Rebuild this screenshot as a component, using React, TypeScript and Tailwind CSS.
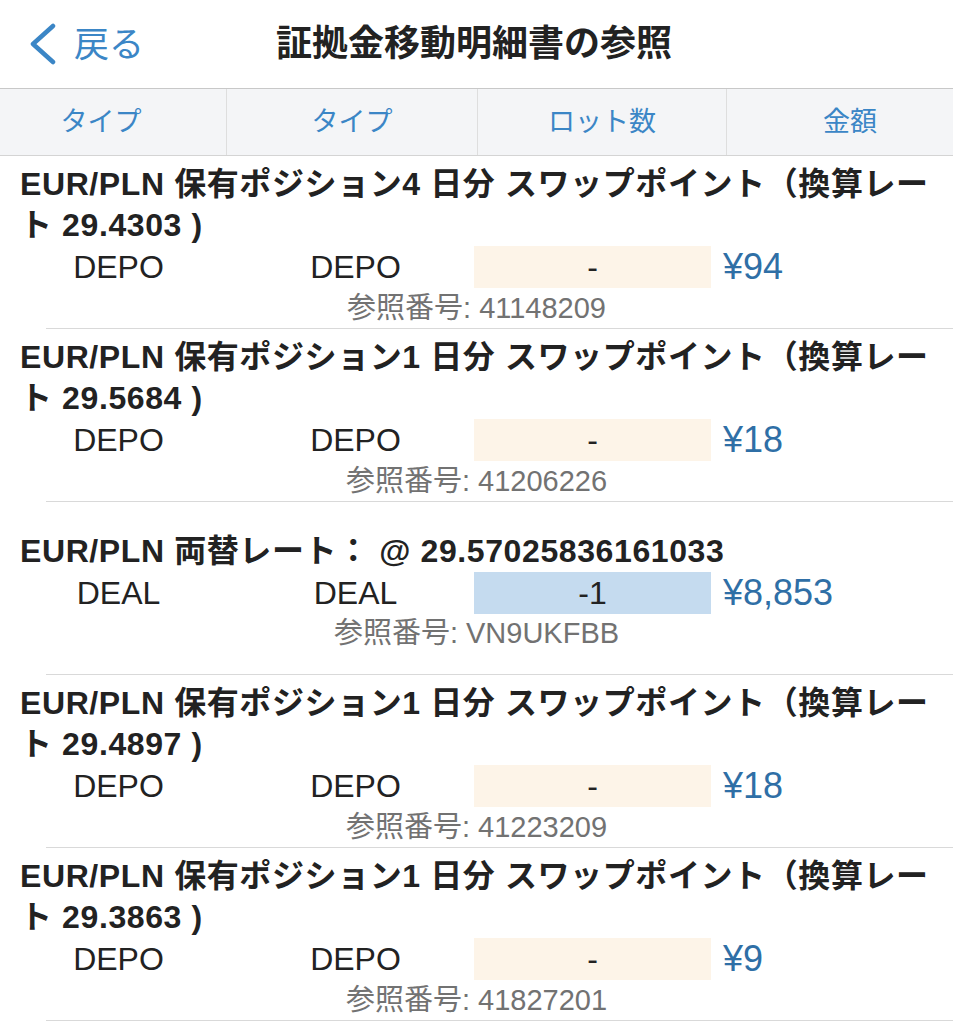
import React from 'react'

type Entry = {
  title: string[]
  kind: string
  lots: string
  amount: string
  ref: string
  deal?: boolean
}

const entries: Entry[] = [
  {
    title: ['EUR/PLN 保有ポジション4 日分 スワップポイント（換算レー', 'ト 29.4303 )'],
    kind: 'DEPO',
    lots: '-',
    amount: '¥94',
    ref: '41148209',
  },
  {
    title: ['EUR/PLN 保有ポジション1 日分 スワップポイント（換算レー', 'ト 29.5684 )'],
    kind: 'DEPO',
    lots: '-',
    amount: '¥18',
    ref: '41206226',
  },
  {
    title: ['EUR/PLN 両替レート： @ 29.57025836161033'],
    kind: 'DEAL',
    lots: '-1',
    amount: '¥8,853',
    ref: 'VN9UKFBB',
    deal: true,
  },
  {
    title: ['EUR/PLN 保有ポジション1 日分 スワップポイント（換算レー', 'ト 29.4897 )'],
    kind: 'DEPO',
    lots: '-',
    amount: '¥18',
    ref: '41223209',
  },
  {
    title: ['EUR/PLN 保有ポジション1 日分 スワップポイント（換算レー', 'ト 29.3863 )'],
    kind: 'DEPO',
    lots: '-',
    amount: '¥9',
    ref: '41827201',
  },
]

const font = { fontFamily: '"Liberation Sans", "Noto Sans CJK JP", sans-serif' }

const Row = ({ e }: { e: Entry }) => (
  <div className="flex flex-col">
    <div className="h-[172px] flex flex-col justify-center pt-2">
      {/* Title */}
      <div className="pl-[20px] text-[32px] leading-[41px] font-bold text-[#222] tracking-[0.6px]">
        {e.title.map((t, i) => (
          <div key={i} className="whitespace-nowrap">{t}</div>
        ))}
      </div>

      {/* Values */}
      <div className="grid grid-cols-[237px_237px_237px_1fr] grid-rows-[42px] h-[42px] items-center text-[32px] leading-[42px] text-[#222]">
        <div className="text-center">{e.kind}</div>
        <div className="text-center">{e.kind}</div>
        <div
          className={`h-[42px] flex items-center justify-center ${e.deal ? 'bg-[#c5dbef]' : 'bg-[#fdf4e8]'}`}
        >
          {e.lots}
        </div>
        <div className="pl-[12px] text-[#2f6fa6] text-[36px] leading-[42px]">{e.amount}</div>
      </div>

      {/* Reference */}
      <div className="h-[40px] flex items-center justify-center text-[29px] leading-none text-[#727272]">
        参照番号: {e.ref}
      </div>
    </div>
    <div className="ml-[46px] h-px bg-[#d9d9d9]" />
  </div>
)

export default function App() {
  return (
    <div className="w-[953px] h-[1024px] overflow-hidden bg-white" style={font}>
      {/* Nav bar */}
      <div className="h-[89px] flex items-center relative border-b border-[#c8c8c8]">
        <button className="flex items-center gap-[16px] pl-[28px] text-[#3b86c6]">
          <svg width="30" height="42" viewBox="0 0 30 42" fill="none">
            <path
              d="M25 3 L5 21 L25 39"
              stroke="#3b86c6"
              strokeWidth="4.5"
              strokeLinecap="round"
              strokeLinejoin="round"
            />
          </svg>
          <span className="text-[35px] leading-none">戻る</span>
        </button>
        <div className="absolute left-[276px] text-[36px] font-bold text-[#222] leading-none">
          証拠金移動明細書の参照
        </div>
      </div>

      {/* Column header */}
      <div className="h-[67px] flex bg-[#f4f5f7] border-b border-[#d4d4d4] text-[27px] text-[#3b86c6]">
        <div className="w-[226px] flex items-center justify-center pr-[24px]">タイプ</div>
        <div className="w-[251px] flex items-center justify-center border-l border-[#dedede]">タイプ</div>
        <div className="w-[249px] flex items-center justify-center border-l border-[#dedede]">ロット数</div>
        <div className="flex-1 flex items-center justify-center pl-[20px] border-l border-[#dedede]">金額</div>
      </div>

      {entries.map((e, i) => (
        <Row key={i} e={e} />
      ))}
    </div>
  )
}
